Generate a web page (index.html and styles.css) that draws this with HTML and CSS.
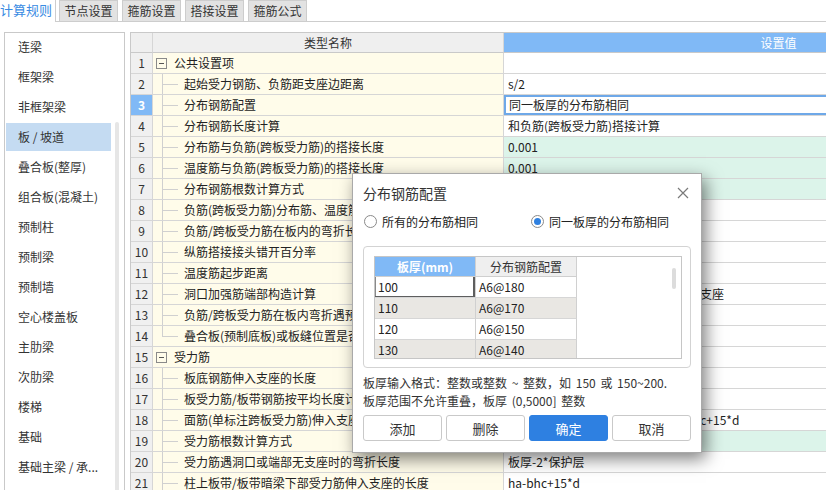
FILE: index.html
```html
<!DOCTYPE html>
<html lang="zh">
<head>
<meta charset="utf-8">
<link rel="stylesheet" href="styles.css">
</head>
<body>
<div class="tabs">
  <div class="tab active">计算规则</div>
  <div class="tab">节点设置</div>
  <div class="tab">箍筋设置</div>
  <div class="tab">搭接设置</div>
  <div class="tab">箍筋公式</div>
</div>
<div class="main">
  <div class="side">
    <ul class="list">
      <li>连梁</li>
      <li>框架梁</li>
      <li>非框架梁</li>
      <li class="sel">板 / 坡道</li>
      <li>叠合板(整厚)</li>
      <li>组合板(混凝土)</li>
      <li>预制柱</li>
      <li>预制梁</li>
      <li>预制墙</li>
      <li>空心楼盖板</li>
      <li>主肋梁</li>
      <li>次肋梁</li>
      <li>楼梯</li>
      <li>基础</li>
      <li>基础主梁 / 承...</li>
    </ul>
    <div class="vscroll"><div class="thumb"></div></div>
  </div>
  <div class="grid-wrap">
    <div class="row head">
      <div class="num"></div><div class="hname">类型名称</div><div class="val">设置值</div>
    </div>
    <div class="row"><div class="num">1</div><div class="name"><span class="toggle"></span>公共设置项</div><div class="val"></div></div>
    <div class="row"><div class="num">2</div><div class="name"><span class="branch"></span>起始受力钢筋、负筋距支座边距离</div><div class="val">s/2</div></div>
    <div class="row"><div class="num cur">3</div><div class="name"><span class="branch"></span>分布钢筋配置</div><div class="val edit">同一板厚的分布筋相同</div></div>
    <div class="row"><div class="num">4</div><div class="name"><span class="branch"></span>分布钢筋长度计算</div><div class="val">和负筋(跨板受力筋)搭接计算</div></div>
    <div class="row"><div class="num">5</div><div class="name"><span class="branch"></span>分布筋与负筋(跨板受力筋)的搭接长度</div><div class="val green">0.001</div></div>
    <div class="row"><div class="num">6</div><div class="name"><span class="branch"></span>温度筋与负筋(跨板受力筋)的搭接长度</div><div class="val green">0.001</div></div>
    <div class="row"><div class="num">7</div><div class="name"><span class="branch"></span>分布钢筋根数计算方式</div><div class="val green">向上取整+1</div></div>
    <div class="row"><div class="num">8</div><div class="name"><span class="branch"></span>负筋(跨板受力筋)分布筋、温度筋是否带弯勾</div><div class="val">否</div></div>
    <div class="row"><div class="num">9</div><div class="name"><span class="branch"></span>负筋/跨板受力筋在板内的弯折长度</div><div class="val">板厚-2*保护层</div></div>
    <div class="row"><div class="num">10</div><div class="name"><span class="branch"></span>纵筋搭接接头错开百分率</div><div class="val">50%</div></div>
    <div class="row"><div class="num">11</div><div class="name"><span class="branch"></span>温度筋起步距离</div><div class="val">s</div></div>
    <div class="row"><div class="num">12</div><div class="name"><span class="branch"></span>洞口加强筋端部构造计算</div><div class="val">按平法图集构造要求弯折后伸入一侧支座</div></div>
    <div class="row"><div class="num">13</div><div class="name"><span class="branch"></span>负筋/跨板受力筋在板内弯折遇预制板是否伸入</div><div class="val">否</div></div>
    <div class="row"><div class="num">14</div><div class="name"><span class="branch last"></span>叠合板(预制底板)或板缝位置是否设置分布筋</div><div class="val">是</div></div>
    <div class="row"><div class="num">15</div><div class="name"><span class="toggle"></span>受力筋</div><div class="val"></div></div>
    <div class="row"><div class="num">16</div><div class="name"><span class="branch"></span>板底钢筋伸入支座的长度</div><div class="val">max(ha/2,5*d)</div></div>
    <div class="row"><div class="num">17</div><div class="name"><span class="branch"></span>板受力筋/板带钢筋按平均长度计算</div><div class="val">否</div></div>
    <div class="row"><div class="num">18</div><div class="name"><span class="branch"></span>面筋(单标注跨板受力筋)伸入支座的锚固长度</div><div class="val">直锚长度足够时直锚，否则取:ha-bhc+15*d</div></div>
    <div class="row"><div class="num">19</div><div class="name"><span class="branch"></span>受力筋根数计算方式</div><div class="val green">向上取整+1</div></div>
    <div class="row"><div class="num">20</div><div class="name"><span class="branch"></span>受力筋遇洞口或端部无支座时的弯折长度</div><div class="val">板厚-2*保护层</div></div>
    <div class="row"><div class="num">21</div><div class="name"><span class="branch"></span>柱上板带/板带暗梁下部受力筋伸入支座的长度</div><div class="val">ha-bhc+15*d</div></div>
  </div>
</div>

<div class="dialog">
  <div class="dlg-title">
    <span>分布钢筋配置</span>
    <svg class="close" width="12" height="12" viewBox="0 0 12 12"><path d="M1 1L11 11M11 1L1 11" stroke="#7a7a7a" stroke-width="1.2" fill="none"/></svg>
  </div>
  <div class="radios">
    <div class="opt first"><span class="circle"></span><span class="lbl">所有的分布筋相同</span></div>
    <div class="opt"><span class="circle on"><span class="dot"></span></span><span class="lbl">同一板厚的分布筋相同</span></div>
  </div>
  <div class="group">
    <div class="inner">
      <div class="itable">
        <div class="irow ihead"><div class="c1">板厚(mm)</div><div class="c2">分布钢筋配置</div></div>
        <div class="irow"><div class="c1 focus">100</div><div class="c2">A6@180</div></div>
        <div class="irow alt"><div class="c1">110</div><div class="c2">A6@170</div></div>
        <div class="irow"><div class="c1">120</div><div class="c2">A6@150</div></div>
        <div class="irow alt"><div class="c1">130</div><div class="c2">A6@140</div></div>
      </div>
      <div class="iscroll"><div class="ithumb"></div></div>
    </div>
  </div>
  <div class="note">
    <div>板厚输入格式：整数或整数 ~ 整数，如 150 或 150~200.</div>
    <div>板厚范围不允许重叠，板厚 (0,5000] 整数</div>
  </div>
  <div class="btns">
    <button class="btn">添加</button>
    <button class="btn">删除</button>
    <button class="btn primary">确定</button>
    <button class="btn">取消</button>
  </div>
</div>
</body>
</html>
```
FILE: styles.css
```css
html, body {
  margin: 0;
  height: 490px;
  overflow: hidden;
  background: #fff;
}
body {
  font-family: "Noto Sans CJK SC", "Noto Sans", sans-serif;
  font-size: 12px;
  color: #222;
}

/* tabs */
.tabs {
  display: flex;
  height: 21px;
  border-bottom: 1px solid #cdcdcd;
}
.tab {
  width: 59px;
  box-sizing: border-box;
  height: 21px;
  line-height: 20px;
  text-align: center;
  background: #e2e2e2;
  border: 1px solid #cdcdcd;
  border-bottom: none;
  margin-left: 4px;
  color: #333;
}
.tab.active {
  width: 56px;
  height: 22px;
  margin-left: 0;
  margin-right: -1px;
  background: #fff;
  border: none;
  border-right: 1px solid #cdcdcd;
  color: #3a8be3;
  font-size: 13px;
  text-align: left;
  position: relative;
  z-index: 1;
}

/* main */
.main {
  display: flex;
  padding-top: 10px;
}
.side {
  width: 119px;
  margin-left: 4px;
  height: 457px;
  border: 1px solid #c9c9c9;
  border-bottom: none;
  display: flex;
  overflow: hidden;
}
.list {
  list-style: none;
  margin: 0;
  padding: 0;
  width: 107px;
}
.list li {
  margin-left: 1px;
  width: 105px;
  height: 28px;
  line-height: 28px;
  margin-bottom: 2px;
  padding-left: 12px;
  box-sizing: border-box;
  color: #333;
  white-space: nowrap;
}
.list li.sel {
  background: #c4dbf2;
}
.vscroll {
  margin-left: 3px;
  width: 4px;
  padding-top: 89px;
}
.thumb {
  width: 4px;
  height: 400px;
  background: #e6e6e6;
  border-radius: 2px;
}

/* grid */
.grid-wrap {
  margin-left: 5px;
  flex: 1;
  overflow: hidden;
  height: 457px;
  border-left: 1px solid #c9c9c9;
  border-top: 1px solid #c9c9c9;
}
.row {
  display: grid;
  grid-template-columns: 22px 351px 550px;
  height: 21px;
}
.row > div {
  box-sizing: border-box;
  border-right: 1px solid #d6d6d6;
  border-bottom: 1px solid #d6d6d6;
  white-space: nowrap;
  overflow: hidden;
  line-height: 20px;
}
.row.head {
  height: 20px;
}
.row.head > div {
  line-height: 19px;
  border-bottom-color: #c9c9c9;
}
.row.head .num, .row.head .hname {
  background: #efefef;
  color: #333;
  text-align: center;
}
.row.head .val {
  background: #80b9f6;
  color: #fff;
  text-align: center;
  padding: 0;
}
.num {
  background: #f0f0f0;
  text-align: center;
  color: #333;
}
.num.cur {
  background: #80b9f6;
  color: #fff;
  font-weight: bold;
}
.name {
  background: #fffcea;
  display: flex;
  align-items: center;
  color: #222;
}
.val {
  padding-left: 4px;
  background: #fff;
  color: #222;
}
.val.green {
  background: #dcf4ea;
}
.val.edit {
  box-shadow: inset 0 0 0 2px #6ea8e8;
  padding-left: 5px;
}
.toggle {
  width: 11px;
  height: 11px;
  box-sizing: border-box;
  border: 1px solid #8a8a8a;
  margin-left: 3px;
  margin-right: 7px;
  background: linear-gradient(#555, #555) center / 5px 1px no-repeat;
  flex: none;
}
.branch {
  flex: none;
  width: 22px;
  height: 20px;
  margin-left: 9px;
  background:
    linear-gradient(#d0d0d0, #d0d0d0) 0 0 / 1px 100% no-repeat,
    linear-gradient(#d0d0d0, #d0d0d0) 0 10px / 16px 1px no-repeat;
}
.branch.last {
  background:
    linear-gradient(#d0d0d0, #d0d0d0) 0 0 / 1px 11px no-repeat,
    linear-gradient(#d0d0d0, #d0d0d0) 0 10px / 16px 1px no-repeat;
}

/* dialog */
.dialog {
  position: absolute;
  left: 352px;
  top: 173px;
  width: 350px;
  height: 280px;
  box-sizing: border-box;
  border: 1px solid #a9a9a9;
  background: #fff;
  padding: 0 10px;
  box-shadow: 4px 6px 16px rgba(0, 0, 0, 0.5);
}
.dlg-title {
  height: 38px;
  display: flex;
  align-items: center;
  justify-content: space-between;
  font-size: 14px;
  color: #333;
}
.close {
  margin-right: 2px;
}
.radios {
  height: 18px;
  display: flex;
  align-items: center;
  color: #222;
}
.opt {
  display: flex;
  align-items: center;
}
.opt.first {
  width: 168px;
}
.circle {
  width: 13px;
  height: 13px;
  box-sizing: border-box;
  border: 1px solid #8a8a8a;
  border-radius: 50%;
  display: inline-flex;
  align-items: center;
  justify-content: center;
  background: #fff;
}
.opt.first .circle { margin-left: 1px; }
.dot {
  width: 7px;
  height: 7px;
  border-radius: 50%;
  background: #2f80e0;
}
.lbl {
  margin-left: 5px;
}
.group {
  margin-top: 16px;
  height: 122px;
  box-sizing: border-box;
  border: 1px solid #d3d3d3;
  border-radius: 4px;
  padding: 9px 8px 8px 10px;
}
.inner {
  height: 103px;
  box-sizing: border-box;
  border: 1px solid #c6c6c6;
  display: flex;
  overflow: hidden;
}
.itable {
  width: 202px;
}
.irow {
  display: flex;
  height: 21px;
}
.irow > div {
  width: 101px;
  box-sizing: border-box;
  border-right: 1px solid #d0d0d0;
  border-bottom: 1px solid #d6d6d6;
  line-height: 20px;
  padding-left: 3px;
  color: #222;
}
.irow.ihead {
  height: 20px;
}
.irow.ihead > div {
  line-height: 19px;
  text-align: center;
  padding-left: 0;
  border-bottom-color: #cfcfcf;
}
.ihead .c1 {
  background: #80b9f6;
  color: #fff;
  font-weight: bold;
}
.ihead .c2 {
  background: #efefef;
  color: #333;
}
.irow.alt > div {
  background: #e9e7e3;
}
.irow .c1.focus {
  box-shadow: inset -2px -1px 0 #5e5e5e, inset 1px 0 0 #8a8a8a;
}
.iscroll {
  margin-left: auto;
  margin-right: 5px;
  width: 4px;
  padding-top: 11px;
}
.ithumb {
  width: 4px;
  height: 21px;
  border-radius: 2px;
  background: #dcdcdc;
}
.note {
  margin-top: 6px;
  line-height: 18px;
  color: #333;
  word-spacing: 2px;
}
.btns {
  margin-top: 5px;
  display: flex;
  gap: 4px;
}
.btn {
  flex: 1;
  height: 26px;
  border: 1px solid #c9c9c9;
  border-radius: 3px;
  background: #fff;
  font-family: "Noto Sans CJK SC", "Noto Sans", sans-serif;
  font-size: 13px;
  color: #333;
  padding: 0;
}
.btn.primary {
  background: #2e80e1;
  border-color: #2e80e1;
  color: #fff;
}
```
